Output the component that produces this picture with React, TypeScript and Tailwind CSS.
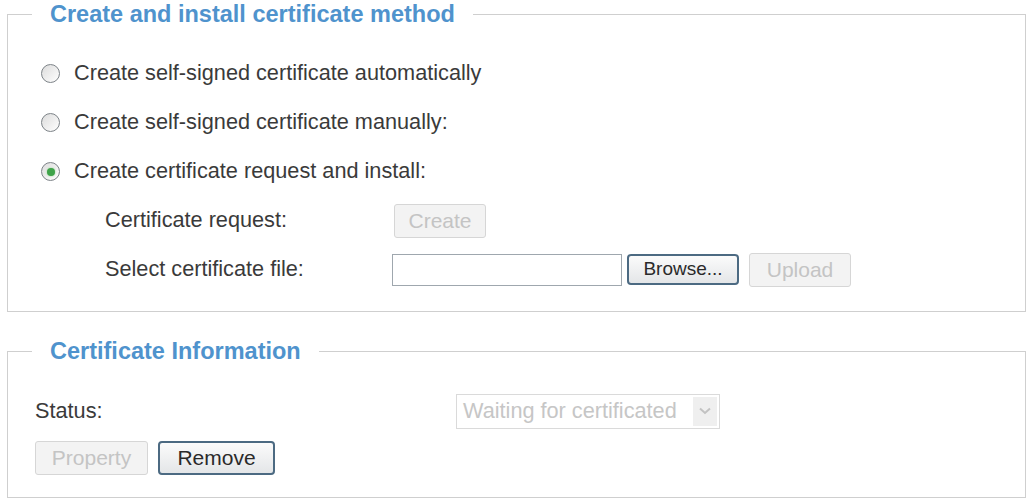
function Radio({ checked }: { checked?: boolean }) {
  return (
    <span className="flex h-[19px] w-[19px] shrink-0 items-center justify-center rounded-full border border-[#7d8388] bg-gradient-to-br from-[#dcdcdc] to-[#ffffff]">
      {checked && <span className="h-[8px] w-[8px] rounded-full bg-[#3fa34a] shadow-[0_0_2px_#8fd08f]" />}
    </span>
  )
}

function DisabledButton({ label, className }: { label: string; className: string }) {
  return (
    <button
      type="button"
      disabled
      className={`flex items-center justify-center rounded-[3px] border border-[#d6d6d6] bg-[#f3f3f3] text-[21px] text-[#c4c4c4] ${className}`}
    >
      {label}
    </button>
  )
}

function ActiveButton({ label, className }: { label: string; className: string }) {
  return (
    <button
      type="button"
      className={`flex items-center justify-center rounded-[4px] border-2 border-[#4c6a82] bg-gradient-to-b from-[#fbfbfb] to-[#e4e6e8] text-[#2a2a2a] ${className}`}
    >
      {label}
    </button>
  )
}

const options = [
  { label: 'Create self-signed certificate automatically', checked: false },
  { label: 'Create self-signed certificate manually:', checked: false },
  { label: 'Create certificate request and install:', checked: true },
]

export default function App() {
  return (
    <div className="h-[501px] w-[1029px] bg-white pl-[7px] pr-[3px] pt-[1px] font-['Liberation_Sans',Arial,sans-serif] text-[21.7px] text-[#3a3a3a]">
      <fieldset className="border border-[#cfcfcf]">
        <legend className="ml-[24px] px-[18px] text-[23.5px] font-bold leading-[26px] text-[#4f93cd]">
          Create and install certificate method
        </legend>
        <div className="flex flex-col pb-[17px] pl-[33px] pt-[22px]">
          {options.map((o) => (
            <div key={o.label} className="flex h-[49px] items-center gap-[14px]">
              <Radio checked={o.checked} />
              <span>{o.label}</span>
            </div>
          ))}
          <div className="flex h-[49px] items-center pl-[64px]">
            <span className="w-[287px]">Certificate request:</span>
            <DisabledButton label="Create" className="ml-[2px] h-[34px] w-[92px]" />
          </div>
          <div className="flex h-[49px] items-center pl-[64px]">
            <span className="w-[287px]">Select certificate file:</span>
            <input
              type="text"
              readOnly
              className="h-[32px] w-[230px] border border-[#9fa7ae] bg-white outline-none"
            />
            <ActiveButton label="Browse..." className="ml-[5px] h-[31px] w-[112px] text-[19px]" />
            <DisabledButton label="Upload" className="ml-[10px] h-[34px] w-[102px]" />
          </div>
        </div>
      </fieldset>

      <fieldset className="mt-[26px] border border-[#cfcfcf]">
        <legend className="ml-[24px] px-[18px] text-[23.5px] font-bold leading-[26px] text-[#4f93cd]">
          Certificate Information
        </legend>
        <div className="flex flex-col gap-[12px] pb-[22px] pl-[27px] pt-[29px]">
          <div className="flex h-[36px] items-center">
            <span className="w-[421px]">Status:</span>
            <div className="flex h-[35px] w-[264px] items-center border border-[#dadada] bg-white pl-[6px] text-[#c6c6c6]">
              <span className="flex-1">Waiting for certificated</span>
              <span className="mr-[2px] flex h-[29px] w-[24px] items-center justify-center bg-[#efefef]">
                <svg width="12" height="8" viewBox="0 0 12 8" fill="none">
                  <path d="M1 1.5 L6 6 L11 1.5" stroke="#c2c2c2" strokeWidth="2" />
                </svg>
              </span>
            </div>
          </div>
          <div className="flex items-center gap-[10px]">
            <DisabledButton label="Property" className="h-[34px] w-[113px]" />
            <ActiveButton label="Remove" className="h-[34px] w-[117px] text-[21px]" />
          </div>
        </div>
      </fieldset>
    </div>
  )
}
